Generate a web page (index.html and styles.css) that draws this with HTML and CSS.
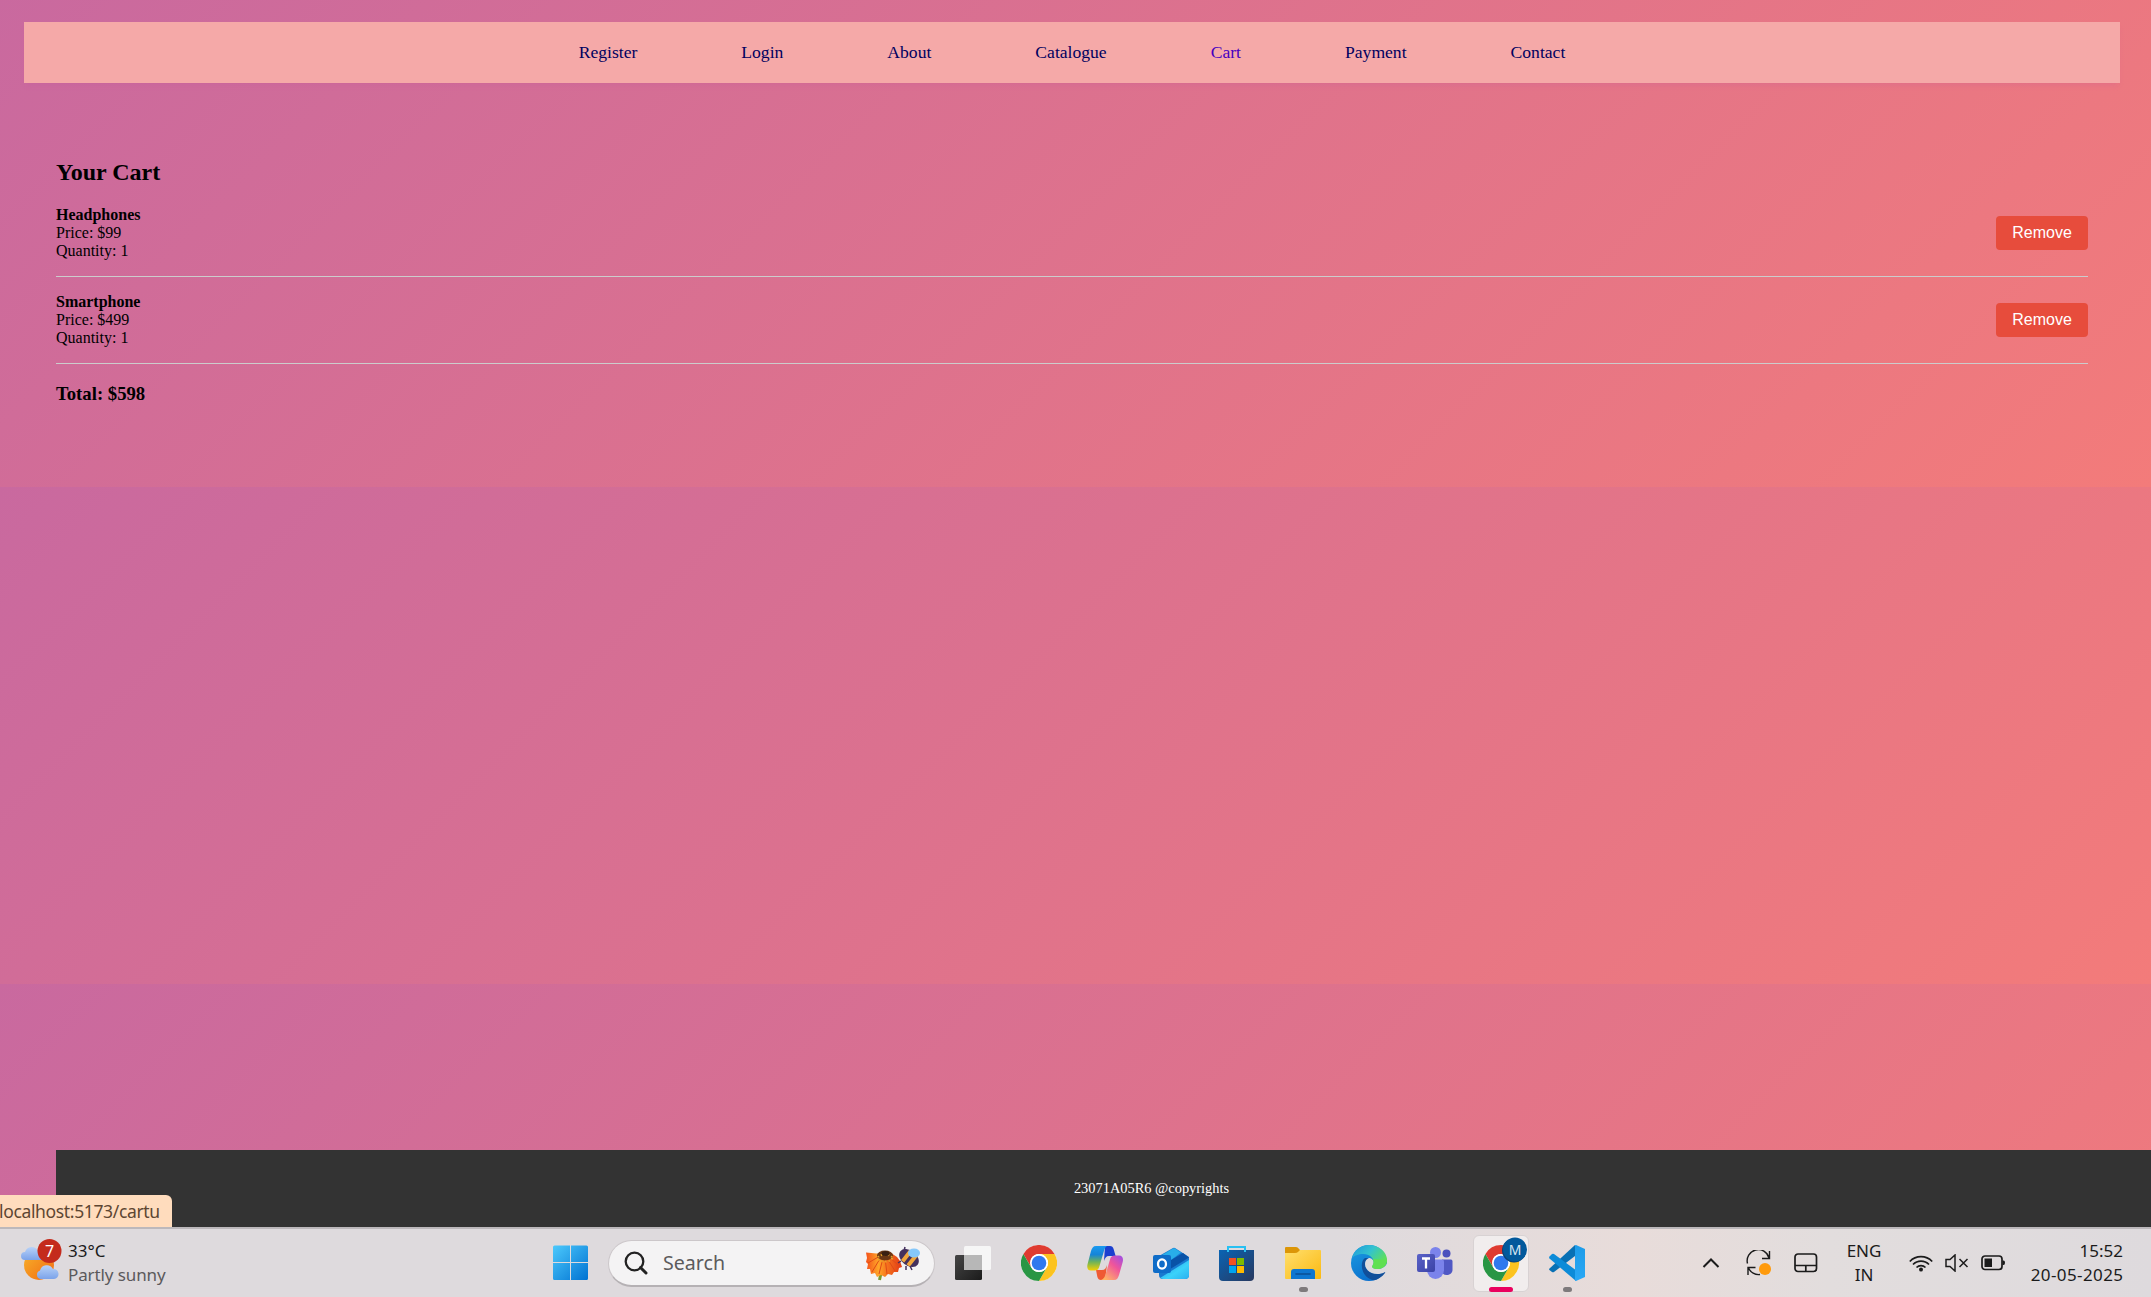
FILE: index.html
```html
<!DOCTYPE html>
<html lang="en">
<head>
<meta charset="utf-8">
<title>Your Cart</title>
<link rel="stylesheet" href="styles.css">
</head>
<body>
<svg class="defs" width="0" height="0" aria-hidden="true">
  <defs>
    <linearGradient id="win" x1="0" y1="0" x2="1" y2="1"><stop offset="0" stop-color="#4cc9fc"/><stop offset="1" stop-color="#0072d2"/></linearGradient>
    <linearGradient id="sun" x1="0" y1="0" x2="1" y2="1"><stop offset="0" stop-color="#f7b32b"/><stop offset="1" stop-color="#f26a12"/></linearGradient>
    <linearGradient id="cloud" x1="0" y1="0" x2="0" y2="1"><stop offset="0" stop-color="#b8d2f8"/><stop offset="1" stop-color="#7ba3ea"/></linearGradient>
    <linearGradient id="petal" x1="0" y1="0" x2="1" y2="0"><stop offset="0" stop-color="#f4511a"/><stop offset=".35" stop-color="#ffa628"/><stop offset=".6" stop-color="#f4701d"/><stop offset="1" stop-color="#e23815"/></linearGradient>
    <linearGradient id="dark" x1="0" y1="0" x2="1" y2="1"><stop offset="0" stop-color="#454545"/><stop offset="1" stop-color="#1b1b1b"/></linearGradient>
    <linearGradient id="copA" x1="0" y1="0" x2="0" y2="1"><stop offset="0" stop-color="#1a9af0"/><stop offset=".35" stop-color="#1584d8"/><stop offset=".65" stop-color="#6db35a"/><stop offset="1" stop-color="#f5d000"/></linearGradient>
    <linearGradient id="copB" x1="1" y1="0" x2=".2" y2="1"><stop offset="0" stop-color="#9a4de8"/><stop offset=".45" stop-color="#f0559a"/><stop offset="1" stop-color="#ffb765"/></linearGradient>
    <linearGradient id="outl" x1="0" y1="0" x2="1" y2="1"><stop offset="0" stop-color="#1b8be0"/><stop offset=".6" stop-color="#3bd2fa"/><stop offset="1" stop-color="#2bb0f0"/></linearGradient>
    <linearGradient id="store" x1="0" y1="0" x2="1" y2="1"><stop offset="0" stop-color="#0a64b4"/><stop offset="1" stop-color="#28385f"/></linearGradient>
    <linearGradient id="folder" x1="0" y1="0" x2="1" y2="1"><stop offset="0" stop-color="#ffdf6e"/><stop offset="1" stop-color="#fbb911"/></linearGradient>
    <linearGradient id="edgeA" x1="0" y1="0" x2="1" y2=".6"><stop offset="0" stop-color="#1e96dc"/><stop offset=".5" stop-color="#33c2cf"/><stop offset="1" stop-color="#62e34d"/></linearGradient>
    <linearGradient id="edgeB" x1="0" y1="0" x2=".5" y2="1"><stop offset="0" stop-color="#1b9de2"/><stop offset="1" stop-color="#0b6fcd"/></linearGradient>
    <linearGradient id="team" x1="0" y1="0" x2="1" y2="1"><stop offset="0" stop-color="#5a62c8"/><stop offset="1" stop-color="#3b42a6"/></linearGradient>
    <linearGradient id="vs" x1="0" y1="0" x2="0" y2="1"><stop offset="0" stop-color="#1d9be8"/><stop offset="1" stop-color="#29a8f5"/></linearGradient>
    <g id="chrome">
      <circle cx="18" cy="18" r="18" fill="#fff"/>
      <path d="M2.4 9A18 18 0 0 1 33.600 9H18a9 9 0 0 0-7.800 4.500L10.200 22.500Z" fill="#df3b30"/>
      <path d="M33.600 9A18 18 0 0 1 18 36L25.800 22.500A9 9 0 0 0 18 9Z" fill="#fcc31f"/>
      <path d="M18 36A18 18 0 0 1 2.400 9L10.200 22.500A9 9 0 0 0 25.800 22.500Z" fill="#299644"/>
      <circle cx="18" cy="18" r="9" fill="#fff"/><circle cx="18" cy="18" r="7.300" fill="#3079ee"/>
    </g>
  </defs>
</svg>

<div class="page">
  <nav class="navbar">
    <a class="nav-link">Register</a>
    <a class="nav-link">Login</a>
    <a class="nav-link">About</a>
    <a class="nav-link">Catalogue</a>
    <a class="nav-link active">Cart</a>
    <a class="nav-link">Payment</a>
    <a class="nav-link">Contact</a>
  </nav>

  <main class="cart">
    <h2 class="cart-title">Your Cart</h2>
    <div class="cart-item">
      <div><strong>Headphones</strong><br>Price: $99<br>Quantity: 1</div>
      <button class="remove">Remove</button>
    </div>
    <div class="cart-item">
      <div><strong>Smartphone</strong><br>Price: $499<br>Quantity: 1</div>
      <button class="remove">Remove</button>
    </div>
    <h3 class="total">Total: $598</h3>
  </main>

  <footer class="footer">23071A05R6 @copyrights</footer>
  <div class="status">localhost:5173/cartu</div>
</div>

<div class="taskbar">
  <div class="weather">
    <svg width="42" height="44" viewBox="0 0 42 44">
      <circle cx="19" cy="26" r="15" fill="url(#sun)"/>
      <path d="M5 21a4 4 0 0 1 0-8 7 7 0 0 1 13-1 5 5 0 0 1 4 9Z" fill="url(#cloud)"/>
      <path d="M20 40a4.500 4.500 0 0 1 0-8.500 7 7 0 0 1 13-1.500 5 5 0 0 1 1 10Z" fill="url(#cloud)"/>
      <circle cx="29.500" cy="12" r="12" fill="#c42b1c"/>
      <text x="29.500" y="17.500" class="badge-num">7</text>
    </svg>
    <div class="weather-text"><span class="temp">33°C</span><span class="cond">Partly sunny</span></div>
  </div>

  <div class="apps">
    <svg class="app" width="36" height="36" viewBox="0 0 36 36"><path d="M0 2a1.500 1.500 0 0 1 1.500-1.500H17V17H0ZM18 .5H33.500A1.500 1.500 0 0 1 35 2V17H18ZM0 18H17V35H1.500A1.500 1.500 0 0 1 0 33.500ZM18 18H35V33.500A1.500 1.500 0 0 1 33.500 35H18Z" fill="url(#win)"/></svg>
    <div class="search">
      <svg width="24" height="24" viewBox="0 0 24 24" fill="none" stroke="#222" stroke-width="2.300"><circle cx="10.500" cy="10.500" r="8.800"/><path d="M16.500 16.500 22 22" stroke-width="3" stroke-linecap="round"/></svg>
      <span class="search-label">Search</span>
      <svg width="58" height="36" viewBox="0 0 58 36">
        <path d="M18 28l-1.500 7" stroke="#7b9a2d" stroke-width="3"/>
        <path d="M19 9 3 7.500 4 13 3 17l2 2-1 5 3 0 1 5 4-1 2 4 4-2 4 2 3-3 4 1 2-3 4 0 1-4 3-1-2-6-3-4-6-4Z" fill="url(#petal)"/>
        <path d="M18 12 9 27M20 13l-4 16M22 13l2 16M24 13l8 13M17 11 5 18M25 11l10 9" stroke="#df4a17" stroke-width="1"/>
        <ellipse cx="22" cy="10.500" rx="8" ry="5" fill="#6b3714"/><ellipse cx="22" cy="13" rx="7" ry="3.500" fill="none" stroke="#e7a32b" stroke-width="2" stroke-dasharray="1.500 2"/><ellipse cx="22.500" cy="8.500" rx="4" ry="2.500" fill="#392012"/>
        <g transform="rotate(38 46 13)"><ellipse cx="46" cy="13" rx="11" ry="7.500" fill="#44305d"/><path d="M41 6.500h4v13h-4ZM48 6h4v13.500h-4Z" fill="#f2a63b"/></g>
        <path d="M43 21v4M47 21l2 4M38 16l-3 2M41 6l1-4" stroke="#44305d" stroke-width="1.500"/><ellipse cx="51" cy="8" rx="6" ry="4.500" fill="#86c8fa"/>
      </svg>
    </div>
    <svg class="app" width="36" height="36" viewBox="0 0 36 36"><rect x="0" y="10" width="27" height="25" rx="1.500" fill="url(#dark)"/><rect x="9" y="1" width="27" height="24" rx="1.500" fill="#f6f6f6"/><path d="M9 10H27V25H9Z" fill="#b7b7b7"/></svg>
    <svg class="app" width="36" height="36" viewBox="0 0 36 36"><use href="#chrome"/></svg>
    <svg class="app" width="36" height="36" viewBox="0 0 36 36">
      <path d="M18 1h5c2 0 3 1.200 3.600 3l2 7H22c-3 0-4 2-5 5Z" fill="#1b3fcf"/>
      <path d="M18 35h-4c-2 0-3-1.200-3.600-3L9 25h6c3 0 4-2 5-5Z" fill="#ef5a34"/>
      <path d="M9 1H20c-2 1-2.500 3-3.200 5.500L12.500 21c-.8 3-2 4.500-5 4.500H4C.5 25.500-.3 22.500.6 19L4 6C5 3 6 1 9 1Z" fill="url(#copA)"/>
      <path d="M27 35H14c3-1 4-3.500 4.700-6L23 14.500c.8-3 2-4 5-4h4c3.500 0 4.600 3 3.700 6.500L32 30c-1 3-2 5-5 5Z" fill="url(#copB)"/>
    </svg>
    <svg class="app" width="36" height="36" viewBox="0 0 36 36"><path d="M6 11 20 3q1-.6 2 0l14 9v18q0 4-4 4H10q-4 0-4-4Z" fill="#1879cf"/><path d="M9 10 20 3.500q1-.6 2 0l6 4L14 18Z" fill="#28aee9"/><path d="M13 18 30 8l6 4.500L14 26Z" fill="#0952a7"/><path d="M7 33 36 15v15q0 4-4 4H10Z" fill="url(#outl)"/><rect y="10" width="18" height="18" rx="2" fill="#0f6cc8"/><ellipse cx="9" cy="19" rx="4" ry="4.700" fill="none" stroke="#fff" stroke-width="2.300"/></svg>
    <svg class="app" width="36" height="36" viewBox="0 0 36 36"><path d="M0 5h35v27a4 4 0 0 1-4 4H4a4 4 0 0 1-4-4Z" fill="url(#store)"/><path d="M9 7V2h17v5" fill="none" stroke="#28c0f2" stroke-width="2"/><path d="M10 13h7v7h-7Z" fill="#f25022"/><path d="M18 13h7v7h-7Z" fill="#7fba00"/><path d="M10 21h7v7h-7Z" fill="#00a4ef"/><path d="M18 21h7v7h-7Z" fill="#ffb900"/></svg>
    <div class="slot running"><svg class="app" width="36" height="36" viewBox="0 0 36 36"><path d="M0 3q0-1 1-1h10q1 0 1.600.6L15 5v6H0Z" fill="#dc9608"/><path d="M0 8h10q2 0 3-1l2-2h20q1 0 1 1v27q0 1-1 1H1q-1 0-1-1Z" fill="url(#folder)"/><path d="M6 34v-7q0-3 3-3h18q3 0 3 3v7Z" fill="#0e76d0"/><path d="M11 29h14" stroke="#0b4f94" stroke-width="1.600" stroke-linecap="round"/></svg></div>
    <svg class="app" width="36" height="36" viewBox="0 0 36 36"><circle cx="18" cy="18" r="18" fill="url(#edgeB)"/><path d="M1 13C3 5 10 0 18 0c10 0 18 7 18 15 0 6-4 9-9 9-4 0-6-1-6-2.500 0-1 1.500-2 1.500-4.500 0-4-4-8-10-8C7 9 3 11 1 13Z" fill="url(#edgeA)"/><path d="M14 13c-6 4-4 20 9 22.300C27 34.500 31 32 34 28c.5-.8 0-1.300-1-.8C23 31.500 14 26 14 19c0-3 1.500-5 4-6Z" fill="#114f9a"/><path d="M21.500 21c-1 1.500 1 3 5 3 4 0 8-2 9.500-6l1 9-3 0c-9 5-20 0-20-8 0-3 1.500-5 4-6 3 0 5 3 4.500 5Z" fill="#dddadd"/><path d="M22 14c1 3 .5 5-.5 6.500-1.500 2 1 3.500 5 3.500 5 0 9.500-4 9.500-9Z" fill="#5fe052"/></svg>
    <svg class="app" width="36" height="36" viewBox="0 0 36 36"><circle cx="29.500" cy="8.500" r="4" fill="#4a50bd"/><path d="M25 14.500h9q1.500 0 1.500 2V25c0 3-3 5-6 5s-4.500-2-4.500-5Z" fill="#5058c4"/><circle cx="18.500" cy="7.500" r="5.500" fill="#7b83eb"/><path d="M10 14.500h15q2 0 2 2V25a8.500 9 0 0 1-17 0Z" fill="#7b83eb"/><rect x="0" y="9" width="18" height="18" rx="2" fill="url(#team)"/><path d="M5 13.500h8M9 13.500v10" stroke="#fff" stroke-width="2.300"/></svg>
    <div class="slot selected"><svg class="app" width="46" height="46" viewBox="0 -8 46 46"><use href="#chrome"/><circle cx="31" cy="5.500" r="12" fill="#0c4276"/><circle cx="32" cy="4.500" r="12" fill="#02599c"/><text x="32" y="9.500" class="badge-m">M</text></svg></div>
    <div class="slot running"><svg class="app" width="36" height="36" viewBox="0 0 36 36"><path d="M0 24 26 0v11L5 27q-1 .7-2 0L.4 25Z" fill="#0870b4"/><path d="m0 12 3-3q1-.6 2 0L28 26l-1 10L.500 13.500Z" fill="#0c8bd8"/><path d="m26 .200 1-.2 9 4v28l-9 4-1-.500Z" fill="url(#vs)"/></svg></div>
  </div>

  <div class="tray">
    <svg class="chev" width="18" height="12" viewBox="0 0 18 12" fill="none" stroke="#1b1b1b" stroke-width="2"><path d="m1.500 10 7.500-7.500L16.500 10"/></svg>
    <svg class="sync" width="26" height="26" viewBox="0 0 26 26" fill="none" stroke="#1b1b1b" stroke-width="1.400"><path d="M1.500 13.500A11 11 0 0 1 23 8M23.500 1v7.500H16M2 25v-7.500h7.500M2.500 18A11 11 0 0 0 14 24.500"/><circle cx="19" cy="19" r="6" fill="#ff9a0c" stroke="none"/></svg>
    <svg class="pad" width="24" height="20" viewBox="0 0 24 20" fill="none" stroke="#1b1b1b" stroke-width="1.700"><rect x="1" y="1" width="21.500" height="17.500" rx="3"/><path d="M1 12.500h21.500M11.800 12.500v6"/></svg>
    <div class="lang"><span>ENG</span><span>IN</span></div>
    <svg class="wifi" width="24" height="18" viewBox="0 0 24 18" fill="none" stroke="#1b1b1b" stroke-width="1.700"><path d="M.800 7.500a15.500 15.500 0 0 1 22.400 0M4 10.500a11 11 0 0 1 16 0M7.500 13.500a6.300 6.300 0 0 1 9 0"/><circle cx="12" cy="15.500" r="2" fill="#1b1b1b" stroke="none"/></svg>
    <svg class="vol" width="24" height="18" viewBox="0 0 24 18" fill="none" stroke="#1b1b1b" stroke-width="1.500"><path d="M1 5.500h4L10 1v16l-5-4.500H1ZM14.500 5l8 8M22.500 5l-8 8"/></svg>
    <svg class="bat" width="24" height="16" viewBox="0 0 24 16"><rect x="1" y="1" width="20" height="13.500" rx="3" fill="none" stroke="#1b1b1b" stroke-width="1.700"/><path d="M3.500 3.500H11V12H3.500ZM21.500 5.500h1q1.500 0 1.500 2.300t-1.500 2.300h-1Z" fill="#1b1b1b"/></svg>
    <div class="clock"><span>15:52</span><span class="date">20-05-2025</span></div>
  </div>
</div>
</body>
</html>
```
FILE: styles.css
```css
* { box-sizing: border-box; }

body {
  margin: 0;
  height: 1297px;
  overflow: hidden;
  display: flex;
  flex-direction: column;
  font-family: "Liberation Serif", "Times New Roman", serif;
  font-size: 16px;
  color: #000;
}

.defs { position: absolute; }

.page {
  position: relative;
  height: 1227px;
  display: flex;
  flex-direction: column;
  background: linear-gradient(135deg, #c9699f, #f37b7a) 0 -10px / 100% 497px;
}

.navbar {
  height: 61px;
  margin: 22px 31px 0 24px;
  display: flex;
  justify-content: center;
  align-items: center;
  gap: 104px;
  background: #f5a9a8;
  box-shadow: 0 4px 6px -2px rgba(190, 80, 160, .2);
}

.nav-link { font-size: 17.6px; color: #00005f; }
.nav-link.active { color: #4600c0; }

.cart { margin: 75px 63px 0 56px; }
.cart-title { margin: 0 0 4px; font-size: 24px; line-height: 28px; }

.cart-item {
  height: 87px;
  display: flex;
  justify-content: space-between;
  align-items: center;
  padding-bottom: 1px;
  line-height: 18px;
  border-bottom: 1px solid #ccc;
}

.remove {
  width: 92px;
  height: 34px;
  padding: 0;
  border: 0;
  border-radius: 4px;
  background: #e74c3c;
  color: #fff;
  font: 16px "Liberation Sans", Arial, sans-serif;
}

.total { margin: 19px 0 0; font-size: 18.72px; line-height: 22px; }

.footer {
  margin: auto 0 0 56px;
  height: 77px;
  padding-left: 96px;
  display: flex;
  align-items: center;
  justify-content: center;
  background: #333;
  color: #fff;
  font-size: 14.4px;
}

.status {
  position: absolute;
  left: 0;
  bottom: 0;
  width: 172px;
  height: 32px;
  border-radius: 0 6px 0 0;
  background: #ffdcbd;
  color: #5d4632;
  font: 17.500px/33px "Noto Sans", sans-serif;
  letter-spacing: -.35px;
  text-indent: -1px;
  white-space: nowrap;
}

.taskbar {
  height: 70px;
  display: flex;
  align-items: center;
  position: relative;
  border-top: 2px solid #bcb8bb;
  background: linear-gradient(90deg, #dedadd 0, #dedadd 62%, #e8dcda 76%, #e2dddd 85%, #dedadd 100%);
  font-family: "Noto Sans", sans-serif;
  color: #1b1b1b;
}

.weather { display: flex; width: 553px; padding-left: 20px; gap: 6px; }
.weather-text { display: flex; flex-direction: column; font-size: 17px; line-height: 24px; }
.cond { color: #5b595b; letter-spacing: -.1px; }
.badge-num { fill: #fff; font: 16px "Noto Sans", sans-serif; text-anchor: middle; }
.badge-m { fill: #d8e6f2; font: 14px "Noto Sans", sans-serif; text-anchor: middle; }

.apps { display: flex; align-items: center; gap: 30px; }
.app { flex: none; }

.search {
  display: flex;
  align-items: center;
  width: 327px;
  height: 47px;
  margin: 0 -10px 0 -11px;
  padding: 0 13px 0 15px;
  border: 1px solid #ccc7ca;
  border-bottom: 2px solid #b5b1b4;
  border-radius: 24px;
  background: #f4f3f4;
}
.search-label { margin: 0 auto 0 15px; font-size: 19.600px; color: #5c5b5c; }

.slot {
  position: relative;
  display: flex;
  align-items: center;
  justify-content: center;
  width: 36px;
  height: 57px;
}
.slot.running::after, .slot.selected::after {
  content: "";
  position: absolute;
  left: 50%;
  bottom: 0;
  width: 9px;
  height: 5px;
  margin-left: -4px;
  border-radius: 3px;
  background: #7e7a7c;
}
.slot.selected {
  width: 56px;
  margin: 0 -10px;
  border: 1px solid #d8d2d3;
  border-radius: 6px;
  background: #f1eded;
}
.slot.selected .app { margin: -7px -10px 0 0; }
.slot.selected::after { width: 24px; margin-left: -12px; bottom: -1px; background: #ea005e; }

.tray { display: flex; align-items: center; margin-left: auto; padding-right: 28px; }
.tray svg { flex: none; }
.sync { margin-left: 26px; }
.pad { margin-left: 22px; }
.lang { width: 40px; margin-left: 26px; text-align: center; }
.lang, .clock { display: flex; flex-direction: column; font-size: 17px; line-height: 24px; }
.wifi { margin-left: 25px; }
.vol { margin-left: 12px; }
.bat { margin-left: 12px; }
.clock { width: 96px; margin-left: 22px; align-items: flex-end; }
.date { letter-spacing: .4px; margin-right: -.4px; }
```
